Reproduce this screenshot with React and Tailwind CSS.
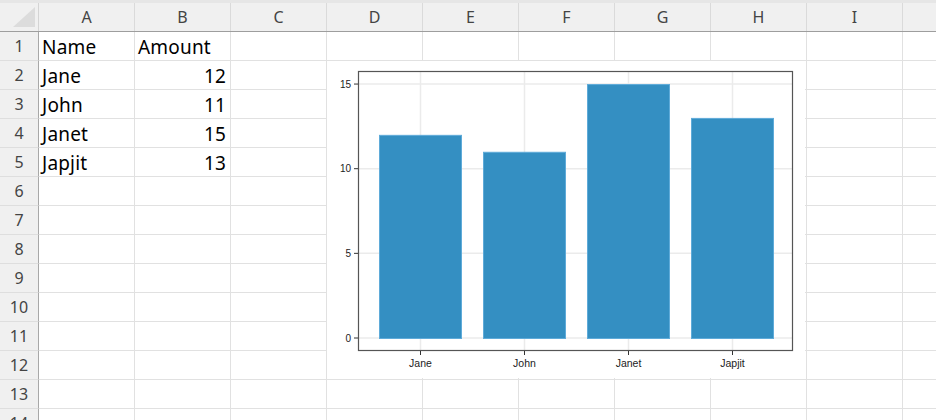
import React from "react";

const columns = ["A", "B", "C", "D", "E", "F", "G", "H", "I", ""];

const data = [
  { name: "Jane", amount: 12 },
  { name: "John", amount: 11 },
  { name: "Janet", amount: 15 },
  { name: "Japjit", amount: 13 },
];

const ROW_COUNT = 14;

function BarChart() {
  // plot frame inside the chart object
  const left = 31;
  const right = 466;
  const top = 10;
  const bottom = 290;
  const zeroY = 277;
  const unit = 16.93;
  const yOf = (v) => zeroY - v * unit;

  return (
    <svg width="478" height="317" viewBox="0 0 478 317" className="block">
      <rect x="0" y="0" width="478" height="317" fill="#ffffff" />
      {/* grid */}
      {[0, 5, 10, 15].map((v) => (
        <line key={v} x1={left} x2={right} y1={yOf(v)} y2={yOf(v)} stroke="#ebebeb" strokeWidth="1.5" />
      ))}
      {data.map((d, i) => {
        const cx = 93.5 + i * 104;
        return <line key={d.name} x1={cx} x2={cx} y1={top} y2={bottom} stroke="#ebebeb" strokeWidth="1.5" />;
      })}
      {/* bars */}
      {data.map((d, i) => {
        const x = 52 + i * 104;
        const y = yOf(d.amount);
        return (
          <rect
            key={d.name}
            x={x + 0.5}
            y={y + 0.5}
            width="82"
            height={zeroY - y}
            fill="#348fc2"
            stroke="#5fabd9"
            strokeWidth="1"
          />
        );
      })}
      {/* frame */}
      <rect x={left + 0.5} y={top + 0.5} width={right - left - 1} height={bottom - top - 1} fill="none" stroke="#555555" strokeWidth="1.2" />
      {/* y axis */}
      {[0, 5, 10, 15].map((v) => (
        <g key={v}>
          <line x1="27" x2={left} y1={yOf(v)} y2={yOf(v)} stroke="#333333" strokeWidth="1" />
          <text
            x="24"
            y={yOf(v) + 3.5}
            textAnchor="end"
            fontSize="10"
            fill="#222222"
            fontFamily="'Liberation Sans', Arial, sans-serif"
          >
            {v}
          </text>
        </g>
      ))}
      {/* x axis */}
      {data.map((d, i) => {
        const cx = 93.5 + i * 104;
        return (
          <g key={d.name}>
            <line x1={cx} x2={cx} y1={bottom} y2={bottom + 4} stroke="#333333" strokeWidth="1" />
            <text
              x={cx}
              y="306"
              textAnchor="middle"
              fontSize="10.5"
              fill="#222222"
              fontFamily="'Liberation Sans', Arial, sans-serif"
            >
              {d.name}
            </text>
          </g>
        );
      })}
    </svg>
  );
}

function cellValue(row, col) {
  if (row === 1) {
    if (col === 0) return { text: "Name" };
    if (col === 1) return { text: "Amount" };
    return null;
  }
  const item = data[row - 2];
  if (!item) return null;
  if (col === 0) return { text: item.name };
  if (col === 1) return { text: item.amount, right: true };
  return null;
}

export default function App() {
  return (
    <div className="relative h-[420px] w-[936px] overflow-hidden bg-white font-['Noto_Sans',sans-serif] text-black">
      <div className="h-[3px] bg-[#e6e6e6]" />

      {/* column headers */}
      <div className="flex h-[29px] border-b border-[#9e9e9e] bg-[#f0f0f0]">
        <div className="relative w-[39px] shrink-0 border-r border-[#d4d4d4]">
          <svg className="absolute bottom-[4px] right-[3px]" width="22" height="20" viewBox="0 0 22 20">
            <polygon points="22,0 22,20 0,20" fill="#dcdcdc" />
          </svg>
        </div>
        {columns.map((c, i) => (
          <div
            key={i}
            className={
              i === columns.length - 1
                ? "flex flex-1 items-center justify-center text-[16px] text-[#444]"
                : "flex w-[96px] shrink-0 items-center justify-center border-r border-[#dadada] text-[16px] text-[#444]"
            }
          >
            {c}
          </div>
        ))}
      </div>

      {/* rows */}
      {Array.from({ length: ROW_COUNT }, (_, r) => r + 1).map((row) => (
        <div key={row} className="flex h-[29px]">
          <div className="flex w-[39px] shrink-0 items-center justify-center border-r border-b border-r-[#a8a8a8] border-b-[#dedede] bg-[#f0f0f0] text-[16px] text-[#444]">
            {row}
          </div>
          {columns.map((c, i) => {
            const v = cellValue(row, i);
            return (
              <div
                key={i}
                className={
                  i === columns.length - 1
                    ? "flex flex-1 border-b border-[#e1e1e1]"
                    : "flex w-[96px] shrink-0 items-center border-r border-b border-[#e1e1e1] px-[3px] pt-[2px] text-[19px] tracking-[0.01em]"
                }
              >
                {v && (
                  <span className={v.right ? "ml-auto pr-[1px]" : ""}>{v.text}</span>
                )}
              </div>
            );
          })}
        </div>
      ))}

      {/* chart object floating over the sheet */}
      <div className="absolute left-[327px] top-[61px]">
        <BarChart />
      </div>
    </div>
  );
}
